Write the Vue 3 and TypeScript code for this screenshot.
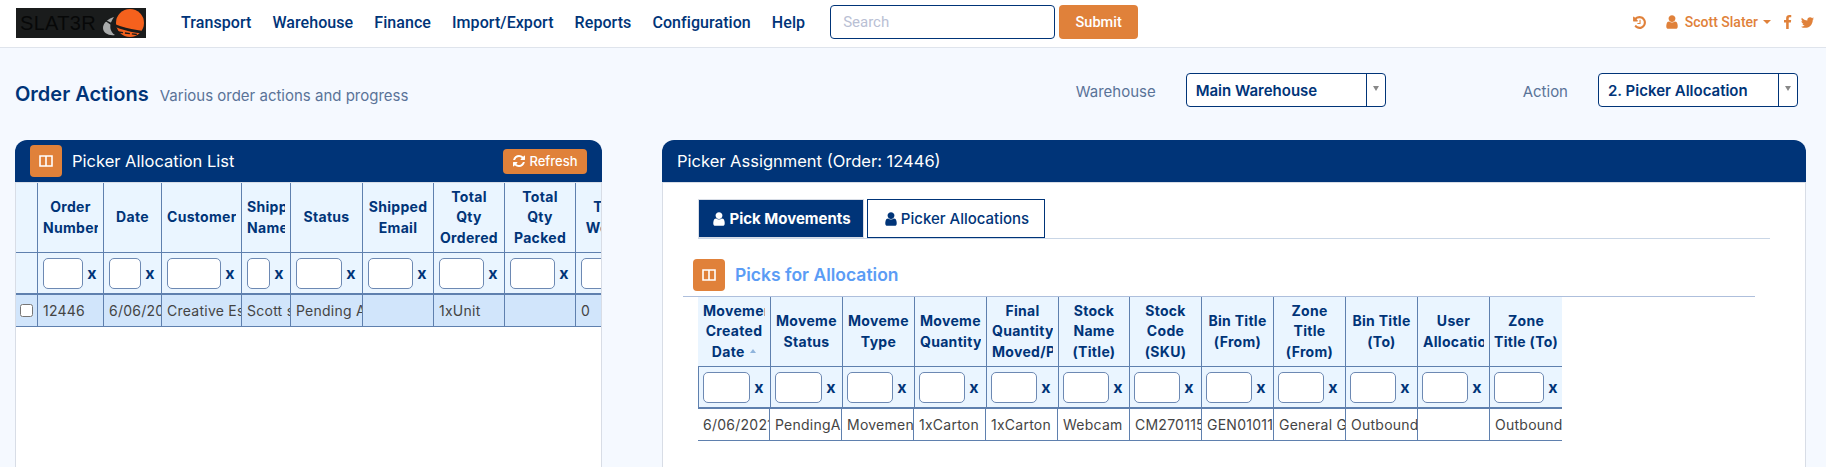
<script setup lang="ts">
interface Col {
  title: string
  width: number
  input: number
  sorted?: boolean
}

const navLinks = ['Transport', 'Warehouse', 'Finance', 'Import/Export', 'Reports', 'Configuration', 'Help']

const userPath =
  'M1536 1399q0 109-62.5 187t-150.5 78h-854q-88 0-150.5-78t-62.5-187q0-85 8.5-160.5t31.5-152 58.5-131 94-89 134.5-34.5q131 128 313 128t313-128q76 0 134.5 34.5t94 89 58.5 131 31.5 152 8.5 160.5zm-256-887q0 159-112.5 271.5t-271.5 112.5-271.5-112.5-112.5-271.5 112.5-271.5 271.5-112.5 271.5 112.5 112.5 271.5z'

const listCols: Col[] = [
  { title: 'Order Number', width: 66, input: 40 },
  { title: 'Date', width: 58, input: 32 },
  { title: 'Customer', width: 80, input: 54 },
  { title: 'Shipping Name', width: 49, input: 23 },
  { title: 'Status', width: 72, input: 46 },
  { title: 'Shipped Email', width: 71, input: 45 },
  { title: 'Total Qty Ordered', width: 71, input: 45 },
  { title: 'Total Qty Packed', width: 71, input: 45 },
  { title: 'Total Weight', width: 71, input: 45 },
]
const listRow = ['12446', '6/06/2021', 'Creative Essentials', 'Scott slater', 'Pending Allocation', '', '1xUnit', '', '0']

const pickCols: Col[] = [
  { title: 'Movement Created Date', width: 73, input: 47, sorted: true },
  { title: 'Movement Status', width: 72, input: 47 },
  { title: 'Movement Type', width: 72, input: 46 },
  { title: 'Movement Quantity', width: 72, input: 46 },
  { title: 'Final Quantity Moved/Picked', width: 72, input: 46 },
  { title: 'Stock Name (Title)', width: 71, input: 46 },
  { title: 'Stock Code (SKU)', width: 72, input: 46 },
  { title: 'Bin Title (From)', width: 72, input: 46 },
  { title: 'Zone Title (From)', width: 72, input: 46 },
  { title: 'Bin Title (To)', width: 72, input: 46 },
  { title: 'User Allocation', width: 72, input: 46 },
  { title: 'Zone Title (To)', width: 72, input: 50 },
]
const pickRow = [
  '6/06/2021',
  'PendingAllocation',
  'Movement',
  '1xCarton',
  '1xCarton',
  'Webcam',
  'CM270115',
  'GEN01011',
  'General Goods',
  'Outbound',
  '',
  'Outbound',
]
</script>

<template>
  <div class="page">
    <header class="nav">
      <div class="logo">
        <span class="logo__text">SLAT3R</span>
        <svg class="logo__mark" viewBox="0 0 46 30" width="46" height="30">
          <path d="M14 9c-6 2-11 6-11 11 0 5 6 8 12 7-5-3-7-10-1-18z" fill="#a9abab" />
          <circle cx="30" cy="15" r="14" fill="#f5611d" />
          <path d="M3 11c10 5 24 10 40 12l-1 2.5C27 24 11 19 3 11z" fill="#1a1c1c" />
          <path d="M18 24l22 3" stroke="#1a1c1c" stroke-width="1.4" stroke-dasharray="5 2" />
        </svg>
      </div>
      <nav class="nav__links">
        <a v-for="link in navLinks" :key="link">{{ link }}</a>
      </nav>
      <input class="nav__search" placeholder="Search" />
      <button class="nav__submit">Submit</button>
      <div class="nav__right">
        <svg class="nav__history" viewBox="0 0 1792 1792" width="15" height="15">
          <path
            fill="currentColor"
            d="M1664 896q0 156-61 298t-164 245-245 164-298 61q-172 0-327-72.5t-264-204.5q-7-10-6.5-22.5t8.5-20.5l137-138q10-9 25-9 16 2 23 12 73 95 179 147t225 52q104 0 198.5-40.5t163.5-109.5 109.5-163.5 40.5-198.5-40.5-198.5-109.5-163.5-163.5-109.5-198.5-40.5q-98 0-188 35.5t-160 101.5l137 138q31 30 14 69-17 40-59 40h-448q-26 0-45-19t-19-45v-448q0-42 40-59 39-17 69 14l130 129q107-101 244.5-156.5t284.5-55.5q156 0 298 61t245 164 164 245 61 298zm-640-288v448q0 14-9 23t-23 9h-320q-14 0-23-9t-9-23v-64q0-14 9-23t23-9h224v-352q0-14 9-23t23-9h64q14 0 23 9t9 23z"
          />
        </svg>
        <svg class="nav__user" viewBox="0 0 1792 1792" width="16" height="16">
          <path fill="currentColor" :d="userPath" />
        </svg>
        <span class="nav__name">Scott Slater</span>
        <i class="nav__caret"></i>
        <svg class="nav__fb" viewBox="0 0 1792 1792" width="15" height="15">
          <path
            fill="currentColor"
            d="M1343 12v264h-157q-86 0-116 36t-30 108v189h293l-39 296h-254v759h-306v-759h-255v-296h255v-218q0-186 104-288.5t277-102.5q147 0 228 12z"
          />
        </svg>
        <svg class="nav__tw" viewBox="0 0 1792 1792" width="15" height="15">
          <path
            fill="currentColor"
            d="M1684 408q-67 98-162 167 1 14 1 42 0 130-38 259.5t-115.5 248.5-184.5 210.5-258 146-323 54.5q-271 0-496-145 35 4 78 4 225 0 401-138-105-2-188-64.5t-114-159.5q33 5 61 5 43 0 85-11-112-23-185.5-111.5t-73.5-205.5v-4q68 38 146 41-66-44-105-115t-39-154q0-88 44-163 121 149 294.5 238.5t371.5 99.5q-8-38-8-74 0-134 94.5-228.5t228.5-94.5q140 0 236 102 109-21 205-78-37 115-142 181 91-10 182-49z"
          />
        </svg>
      </div>
    </header>

    <section class="heading">
      <h1 class="heading__title">Order Actions</h1>
      <span class="heading__sub">Various order actions and progress</span>
      <label class="heading__label heading__label--first">Warehouse</label>
      <div class="select">
        <span class="select__value">Main Warehouse</span>
        <span class="select__arrow"><i></i></span>
      </div>
      <label class="heading__label heading__label--second">Action</label>
      <div class="select">
        <span class="select__value">2. Picker Allocation</span>
        <span class="select__arrow"><i></i></span>
      </div>
    </section>

    <main class="panels">
      <section class="panel">
        <div class="panel__head">
          <button class="icon-btn">
            <svg viewBox="0 0 14 12" width="14" height="12">
              <path d="M1 1h12v10H1zM7 1v10" fill="none" stroke="#fff" stroke-width="1.6" />
            </svg>
          </button>
          <span class="panel__title">Picker Allocation List</span>
          <button class="refresh">
            <svg viewBox="0 0 1792 1792" width="14" height="14">
              <path
                fill="currentColor"
                d="M1639 1056q0 5-1 7-64 268-268 434.5t-478 166.5q-146 0-282.5-55t-243.5-157l-129 129q-19 19-45 19t-45-19-19-45v-448q0-26 19-45t45-19h448q26 0 45 19t19 45-19 45l-137 137q71 66 161 102t187 36q134 0 250-65t186-179q11-17 53-117 8-23 30-23h192q13 0 22.5 9.5t9.5 22.5zm25-800v448q0 26-19 45t-45 19h-448q-26 0-45-19t-19-45 19-45l138-138q-148-137-349-137-134 0-250 65t-186 179q-11 17-53 117-8 23-30 23h-199q-13 0-22.5-9.5t-9.5-22.5v-7q65-268 270-434.5t480-166.5q146 0 284 55.5t245 156.5l130-129q19-19 45-19t45 19 19 45z"
              />
            </svg>
            Refresh
          </button>
        </div>
        <div class="panel__body panel__body--list">
          <table class="grid grid--list">
            <colgroup>
              <col style="width: 22px" />
              <col v-for="col in listCols" :key="col.title" :style="{ width: `${col.width}px` }" />
            </colgroup>
            <thead>
              <tr class="grid__head">
                <th></th>
                <th v-for="col in listCols" :key="col.title"><div>{{ col.title }}</div></th>
              </tr>
              <tr class="grid__filter">
                <th></th>
                <th v-for="col in listCols" :key="col.title">
                  <div class="filter">
                    <input :style="{ width: `${col.input}px` }" />
                    <span>x</span>
                  </div>
                </th>
              </tr>
            </thead>
            <tbody>
              <tr class="grid__row grid__row--selected">
                <td class="grid__check"><input type="checkbox" /></td>
                <td v-for="(value, i) in listRow" :key="i">{{ value }}</td>
              </tr>
            </tbody>
          </table>
        </div>
      </section>

      <section class="panel">
        <div class="panel__head panel__head--plain">
          <span class="panel__title">Picker Assignment (Order: 12446)</span>
        </div>
        <div class="panel__body">
          <div class="tabs">
            <button class="tab tab--active">
              <svg viewBox="0 0 1792 1792" width="16" height="16"><path fill="currentColor" :d="userPath" /></svg>
              Pick Movements
            </button>
            <button class="tab">
              <svg viewBox="0 0 1792 1792" width="16" height="16"><path fill="currentColor" :d="userPath" /></svg>
              Picker Allocations
            </button>
          </div>
          <div class="section-head">
            <button class="icon-btn">
              <svg viewBox="0 0 14 12" width="14" height="12">
                <path d="M1 1h12v10H1zM7 1v10" fill="none" stroke="#fff" stroke-width="1.6" />
              </svg>
            </button>
            <h2>Picks for Allocation</h2>
          </div>
          <div class="picks">
            <table class="grid grid--picks">
              <colgroup>
                <col v-for="col in pickCols" :key="col.title" :style="{ width: `${col.width}px` }" />
              </colgroup>
              <thead>
                <tr class="grid__head">
                  <th v-for="col in pickCols" :key="col.title">
                    <div>
                      {{ col.title }}
                      <i v-if="col.sorted" class="sort"></i>
                    </div>
                  </th>
                </tr>
                <tr class="grid__filter">
                  <th v-for="col in pickCols" :key="col.title">
                    <div class="filter">
                      <input :style="{ width: `${col.input}px` }" />
                      <span>x</span>
                    </div>
                  </th>
                </tr>
              </thead>
            </table>
            <table class="grid grid--picks">
              <colgroup>
                <col v-for="(_, i) in pickRow" :key="i" style="width: 72px" />
              </colgroup>
              <tbody>
                <tr class="grid__row">
                  <td v-for="(value, i) in pickRow" :key="i">{{ value }}</td>
                </tr>
              </tbody>
            </table>
          </div>
        </div>
      </section>
    </main>
  </div>
</template>

<style>
html,
body {
  margin: 0;
  overflow: hidden;
}
</style>

<style scoped>
.page {
  display: flex;
  flex-direction: column;
  height: 467px;
  overflow: hidden;
  background: #f5f9ff;
  color: #003478;
  font-family: Inter, 'Liberation Sans', sans-serif;
  font-size: 14px;
}

.nav {
  display: flex;
  flex: none;
  align-items: center;
  box-sizing: border-box;
  height: 48px;
  padding: 0 11px 3px 16px;
  border-bottom: 1px solid #dfe4ec;
  background: #fff;
}

.logo {
  display: flex;
  align-items: center;
  justify-content: space-between;
  box-sizing: border-box;
  width: 130px;
  height: 30px;
  margin-top: 2px;
  padding: 0 0 0 4px;
  background: #1a1c1c;
}

.logo__text {
  color: #070808;
  font-family: 'Liberation Sans', sans-serif;
  font-size: 20px;
  letter-spacing: 0.3px;
}

.nav__links {
  display: flex;
  gap: 21px;
  margin-left: 35px;
}

.nav__links a {
  font-family: Roboto, sans-serif;
  font-size: 16px;
  font-weight: 500;
  letter-spacing: 0.07px;
}

.nav__search {
  box-sizing: border-box;
  width: 225px;
  height: 34px;
  margin-left: 25px;
  padding: 0 12px;
  border: 1px solid #003478;
  border-radius: 4px;
  outline: none;
  font: 15px Roboto, sans-serif;
}

.nav__search::placeholder {
  color: #b9c0d4;
}

.nav__submit {
  width: 79px;
  height: 34px;
  margin-left: 4px;
  border: 0;
  border-radius: 4px;
  background: #e0813a;
  color: #fff;
  font: 500 14.5px Roboto, sans-serif;
}

.nav__right {
  display: flex;
  align-items: center;
  margin-left: auto;
  color: #e0813a;
}

.nav__user {
  margin-left: 17px;
}

.nav__name {
  margin-left: 5px;
  font-family: Roboto, sans-serif;
  font-size: 14px;
  font-weight: 500;
}

.nav__caret {
  width: 0;
  height: 0;
  margin-left: 5px;
  border: 4px solid transparent;
  border-top-color: currentColor;
  border-bottom: 0;
}

.nav__fb {
  margin-left: 9px;
}

.nav__tw {
  margin-left: 5px;
}

.heading {
  display: flex;
  flex: none;
  align-items: flex-start;
  height: 92px;
  box-sizing: border-box;
  padding: 25px 28px 0 15px;
}

.heading__title {
  margin: 9px 0 0;
  font-size: 20px;
  font-weight: 600;
  line-height: 24px;
}

.heading__sub {
  margin: 14px 0 0 11px;
  color: #5a7398;
  font-size: 15px;
  line-height: 18px;
}

.heading__label {
  margin-top: 10px;
  color: #5a7398;
  font-size: 15px;
  line-height: 18px;
}

.heading__label--first {
  margin-left: auto;
}

.heading__label--second {
  margin-left: 137px;
}

.select {
  display: flex;
  box-sizing: border-box;
  width: 200px;
  height: 34px;
  margin-left: 30px;
  border: 1px solid #003478;
  border-radius: 4px;
  background: #fff;
  font-size: 15px;
  font-weight: 600;
  line-height: 33px;
}

.select__value {
  flex: 1;
  padding-left: 9px;
}

.select__arrow {
  display: flex;
  justify-content: center;
  box-sizing: border-box;
  width: 19px;
  padding-top: 12px;
  border-left: 1px solid #003478;
}

.select__arrow i {
  width: 0;
  height: 0;
  border: 3.5px solid transparent;
  border-top: 5px solid #888;
  border-bottom: 0;
}

.panels {
  display: grid;
  flex: 1;
  grid-template-columns: 587px 1144px;
  gap: 60px;
  min-height: 0;
  padding-left: 15px;
}

.panel {
  display: flex;
  flex-direction: column;
  min-width: 0;
  overflow: hidden;
  border-radius: 12px 12px 0 0;
  background: #fff;
}

.panel__head {
  display: flex;
  flex: none;
  align-items: center;
  box-sizing: border-box;
  height: 43px;
  padding: 0 15px;
  border-bottom: 1px solid #d8dde6;
  background: #003478;
  color: #fff;
}

.panel__title {
  margin-left: 10px;
  font-size: 16.5px;
}

.panel__head--plain .panel__title {
  margin-left: 0;
}

.icon-btn {
  display: flex;
  flex: none;
  align-items: center;
  justify-content: center;
  width: 32px;
  height: 32px;
  padding: 0;
  border: 0;
  border-radius: 4px;
  background: #e0813a;
}

.refresh {
  display: flex;
  align-items: center;
  justify-content: center;
  gap: 3px;
  width: 84px;
  height: 25px;
  margin-left: auto;
  padding: 0;
  border: 0;
  border-radius: 4px;
  background: #e0813a;
  color: #fff;
  font: 500 13px Inter, 'Liberation Sans', sans-serif;
}

.panel__body {
  flex: 1;
  min-height: 0;
  overflow: hidden;
  border-right: 1px solid #d8dde6;
  border-left: 1px solid #d8dde6;
}

.grid {
  border-collapse: separate;
  border-spacing: 0;
  table-layout: fixed;
}

.grid--list {
  width: 631px;
}

.grid--picks {
  width: 863px;
}

.grid th,
.grid td {
  box-sizing: border-box;
  padding: 0;
  border-right: 1px solid #5f80ae;
}

.grid__head th {
  height: 70px;
  padding: 0 5px;
  border-bottom: 1px solid #5f80ae;
  background: #eaf5ff;
  font-size: 14px;
  font-weight: 700;
  letter-spacing: 0.3px;
  line-height: 20.5px;
  text-align: center;
  vertical-align: middle;
}

.grid--picks .grid__head th:last-child {
  padding: 0 2px;
}

.grid__head th div {
  overflow: hidden;
}

.grid__filter th {
  height: 42px;
  border-bottom: 2px solid #5f80ae;
  background: #eaf5ff;
}

.grid--picks .grid__filter th:first-child {
  border-left: 1px solid #5f80ae;
}

.grid--picks th:last-child,
.grid--picks td:last-child {
  border-right: 0;
}

.filter {
  display: flex;
  align-items: center;
  padding-left: 5px;
}

.grid--picks .filter {
  padding-left: 4px;
}

.filter input {
  flex: none;
  box-sizing: border-box;
  height: 31px;
  padding: 0;
  border: 1px solid #6d89b3;
  border-radius: 5px;
  outline: none;
  background: #fff;
}

.filter span {
  flex: none;
  width: 18px;
  font-size: 16px;
  font-weight: 700;
  text-align: center;
}

.grid__row td {
  overflow: hidden;
  height: 32px;
  padding-left: 5px;
  border-bottom: 1px solid #5f80ae;
  color: #444;
  letter-spacing: 0.25px;
  white-space: nowrap;
}

.grid__row--selected td {
  background: #d1e5fb;
}

.grid__row td.grid__check {
  padding-left: 0;
  text-align: center;
}

.grid__check input {
  display: block;
  width: 13px;
  height: 13px;
  margin: 0 auto;
}

.tabs {
  display: flex;
  gap: 3px;
  height: 39px;
  margin: 16px 35px 0 35px;
  border-bottom: 1px solid #c9d6e6;
}

.tab {
  display: flex;
  align-items: center;
  justify-content: center;
  gap: 2px;
  box-sizing: border-box;
  width: 178px;
  height: 39px;
  padding: 0;
  border: 1px solid #003478;
  background: #fff;
  color: #003478;
  font: 500 15px Inter, 'Liberation Sans', sans-serif;
}

.tab--active {
  width: 166px;
  border-color: #d8dde6;
  background: #003478;
  color: #fff;
  font-weight: 700;
}

.section-head {
  display: flex;
  align-items: center;
  gap: 10px;
  box-sizing: border-box;
  width: 1072px;
  height: 58px;
  margin-left: 20px;
  padding: 20px 0 5px 10px;
  border-bottom: 1px solid #aebfdc;
}

.section-head h2 {
  margin: 0 0 2px;
  color: #5b9cf5;
  font-size: 17.5px;
  font-weight: 600;
}

.picks {
  margin-left: 35px;
}

.sort {
  display: inline-block;
  width: 0;
  height: 0;
  margin-left: 2px;
  vertical-align: 4px;
  border: 3px solid transparent;
  border-top: 0;
  border-bottom: 4px solid #8fb4dc;
}
</style>
